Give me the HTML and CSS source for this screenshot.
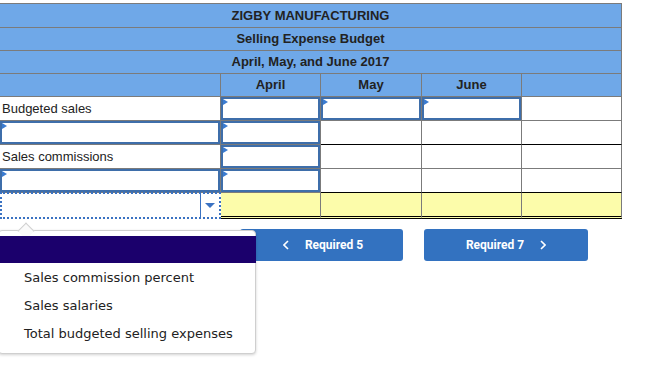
FILE: index.html
```html
<!DOCTYPE html>
<html>
<head>
<meta charset="utf-8">
<link rel="stylesheet" href="styles.css">
</head>
<body>
<div class="sheet">
  <div class="c title h1">ZIGBY MANUFACTURING</div>
  <div class="c title">Selling Expense Budget</div>
  <div class="c title">April, May, and June 2017</div>

  <div class="c head"></div>
  <div class="c head">April</div>
  <div class="c head">May</div>
  <div class="c head">June</div>
  <div class="c head"></div>

  <div class="c lbl">Budgeted sales</div>
  <div class="c inp"><span class="flag"></span></div>
  <div class="c inp"><span class="flag"></span></div>
  <div class="c inp"><span class="flag"></span></div>
  <div class="c"></div>

  <div class="c lbl inp"><span class="flag"></span></div>
  <div class="c inp"><span class="flag"></span></div>
  <div class="c dark"></div>
  <div class="c dark"></div>
  <div class="c dark"></div>

  <div class="c lbl">Sales commissions</div>
  <div class="c inp"><span class="flag"></span></div>
  <div class="c"></div>
  <div class="c"></div>
  <div class="c"></div>

  <div class="c lbl inp"><span class="flag"></span></div>
  <div class="c inp"><span class="flag"></span></div>
  <div class="c dark"></div>
  <div class="c dark"></div>
  <div class="c dark"></div>

  <div class="c selcell">
    <div class="select"><span class="arrowbox"><span class="arrow"></span></span></div>
  </div>
  <div class="c total"></div>
  <div class="c total"></div>
  <div class="c total"></div>
  <div class="c total"></div>
</div>

<div class="nav">
  <button class="btn prev"><svg class="chev" width="6" height="10" viewBox="0 0 6 10"><path d="M5 1 L1 5 L5 9" fill="none" stroke="#fff" stroke-width="1.6"/></svg><span>Required 5</span></button>
  <button class="btn next"><span>Required 7</span><svg class="chev" width="6" height="10" viewBox="0 0 6 10"><path d="M1 1 L5 5 L1 9" fill="none" stroke="#fff" stroke-width="1.6"/></svg></button>
</div>

<div class="menu">
  <span class="caret"></span>
  <div class="item active"></div>
  <div class="item">Sales commission percent</div>
  <div class="item">Sales salaries</div>
  <div class="item">Total budgeted selling expenses</div>
</div>
</body>
</html>
```
FILE: styles.css
```css
html, body {
  margin: 0;
  padding: 0;
  background: #fff;
}
body {
  padding-top: 3px;
  font-family: "Liberation Sans", Arial, sans-serif;
  position: relative;
  height: 366px;
  overflow: hidden;
}
.sheet {
  display: grid;
  grid-template-columns: 221px 100px 101px 100px 100px;
  width: 622px;
  border-top: 1px solid #7b7b7b;
}
.c {
  box-sizing: border-box;
  height: 24px;
  border-right: 1px solid #7b7b7b;
  border-bottom: 1px solid #7b7b7b;
  position: relative;
  font-size: 13px;
  color: #222;
}
.title {
  grid-column: 1 / span 5;
  background: #6fa8e8;
  font-weight: bold;
  text-align: center;
  height: 23px;
  line-height: 22px;
}
.title.h1 {
  height: 24px;
  line-height: 23px;
}
.head {
  background: #6fa8e8;
  font-weight: bold;
  text-align: center;
  height: 23px;
  line-height: 22px;
}
.lbl {
  padding-left: 2px;
  line-height: 23px;
  color: #222;
}
.inp {
  box-shadow: inset 0 0 0 2px #3e6eaa;
}
.flag {
  position: absolute;
  top: 2px;
  left: 2px;
  width: 0;
  height: 0;
  border-left: 5px solid #3a7bd0;
  border-top: 3px solid transparent;
  border-bottom: 3px solid transparent;
}
.dark {
  border-bottom-color: #000;
}
.selcell {
  border-right: none;
  border-bottom: none;
  height: 26px;
}
.select {
  box-sizing: border-box;
  height: 27px;
  margin-top: -1px;
  border: 2px dotted #3a72c2;
  display: flex;
  justify-content: flex-end;
}
.arrowbox {
  width: 18px;
  border-left: 1px solid #3a72c2;
  display: flex;
  align-items: center;
  justify-content: center;
}
.arrow {
  width: 0;
  height: 0;
  border-top: 5px solid #3a72c2;
  border-left: 5px solid transparent;
  border-right: 5px solid transparent;
}
.total {
  background: #fcfcaa;
  height: 26px;
  border-bottom: 3px double #000;
}
.nav {
  display: flex;
  gap: 21px;
  margin-top: 10px;
  padding-left: 240px;
}
.btn {
  height: 32px;
  border: none;
  border-radius: 3px;
  background: #3372c0;
  color: #fff;
  font-family: Roboto, "Liberation Sans", sans-serif;
  font-weight: bold;
  font-size: 12px;
  display: flex;
  align-items: center;
  justify-content: center;
  gap: 16px;
  padding: 0;
}
.btn.prev {
  width: 163px;
  padding-left: 3px;
}
.btn.next {
  width: 164px;
}
.chev {
  display: block;
}
.menu {
  position: absolute;
  left: -2px;
  top: 230px;
  width: 258px;
  height: 124px;
  box-sizing: border-box;
  background: #fff;
  border: 1px solid #cfcfcf;
  border-radius: 4px;
  box-shadow: 0 1px 3px rgba(0,0,0,0.18);
  padding-top: 5px;
  font-family: "DejaVu Sans", Verdana, sans-serif;
  font-size: 13px;
  color: #222;
}
.caret {
  position: absolute;
  left: 21px;
  top: -6px;
  width: 11px;
  height: 11px;
  background: #fafafa;
  border-left: 1px solid #cfcfcf;
  border-top: 1px solid #cfcfcf;
  transform: rotate(45deg);
}
.item {
  height: 28px;
  line-height: 30px;
  padding-left: 25px;
  position: relative;
}
.item.active {
  background: #1b006c;
  height: 27px;
  margin-right: -1px;
}
```
